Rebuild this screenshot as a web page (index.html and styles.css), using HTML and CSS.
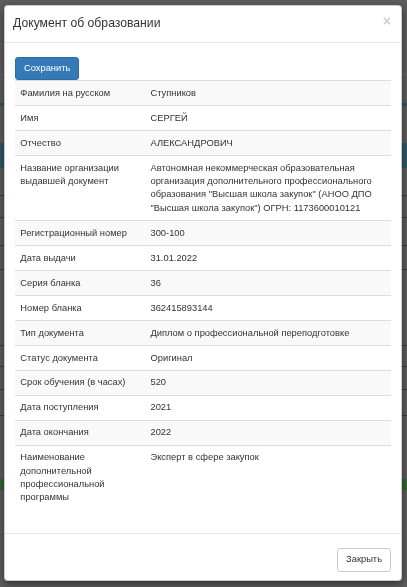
FILE: index.html
```html
<!DOCTYPE html>
<html lang="ru">
<head>
    <meta charset="UTF-8">
    <meta name="viewport" content="width=device-width, initial-scale=1.0">
    <title>Документ об образовании</title>
    <link rel="stylesheet" href="styles.css">
</head>
<body>
    <!-- page behind the dimmed backdrop -->
    <div class="page">
        <div class="page-row h28"></div>
        <div class="page-row h45 line-grey"></div>
        <div class="page-row h28 line-teal"></div>
        <div class="page-row h36"></div>
        <div class="page-row h24 block-teal"></div>
        <div class="page-row h27 line-green"></div>
        <div class="page-row h21 line-green"></div>
        <div class="page-row h27 line-green"></div>
        <div class="page-row h23 line-green"></div>
        <div class="page-row h75 line-green"></div>
        <div class="page-row h20 line-green"></div>
        <div class="page-row h22 line-green"></div>
        <div class="page-row h25 line-green"></div>
        <div class="page-row h62"></div>
        <div class="page-row h10 block-green"></div>
    </div>

    <div class="modal">
        <div class="modal-content">
            <div class="modal-header">
                <button type="button" class="close">&times;</button>
                <h4 class="modal-title">Документ об образовании</h4>
            </div>

            <div class="modal-body">
                <div class="toolbar">
                    <button type="button" class="btn btn-primary">Сохранить</button>
                </div>
                <table class="table">
                    <tr><td class="label">Фамилия на русском</td><td>Ступников</td></tr>
                    <tr><td class="label">Имя</td><td>СЕРГЕЙ</td></tr>
                    <tr><td class="label">Отчество</td><td>АЛЕКСАНДРОВИЧ</td></tr>
                    <tr><td class="label">Название организации выдавшей документ</td><td>Автономная некоммерческая образовательная организация дополнительного профессионального образования "Высшая школа закупок" (АНОО ДПО "Высшая школа закупок") ОГРН: 1173600010121</td></tr>
                    <tr><td class="label">Регистрационный номер</td><td>300-100</td></tr>
                    <tr><td class="label">Дата выдачи</td><td>31.01.2022</td></tr>
                    <tr><td class="label">Серия бланка</td><td>36</td></tr>
                    <tr><td class="label">Номер бланка</td><td>362415893144</td></tr>
                    <tr><td class="label">Тип документа</td><td>Диплом о профессиональной переподготовке</td></tr>
                    <tr><td class="label">Статус документа</td><td>Оригинал</td></tr>
                    <tr><td class="label">Срок обучения (в часах)</td><td>520</td></tr>
                    <tr><td class="label">Дата поступления</td><td>2021</td></tr>
                    <tr><td class="label">Дата окончания</td><td>2022</td></tr>
                    <tr><td class="label">Наименование дополнительной профессиональной программы</td><td>Эксперт в сфере закупок</td></tr>
                </table>
            </div>

            <div class="modal-footer">
                <button type="button" class="btn btn-default">Закрыть</button>
            </div>
        </div>
    </div>
</body>
</html>
```

FILE: styles.css
```css
body, html {
    margin: 0;
    height: 100%;
}
body {
    font-family: "Liberation Sans", Arial, sans-serif;
    font-size: 9.33px;
    line-height: 13.33px;
    color: #333;
    background-color: #5e5e5e;
    overflow: hidden;
}

/* dimmed page behind the modal */
.page-row {
    border-bottom: 1px solid transparent;
}
.h10 { height: 10px; }
.h20 { height: 20px; }
.h21 { height: 21px; }
.h22 { height: 22px; }
.h23 { height: 23px; }
.h24 { height: 24px; }
.h25 { height: 25px; }
.h27 { height: 27px; }
.h28 { height: 28px; }
.h36 { height: 36px; }
.h45 { height: 45px; }
.h62 { height: 62px; }
.h75 { height: 75px; }
.line-grey { border-bottom-color: #6c6c6c; }
.line-teal { border-bottom: 3px solid #2f5866; }
.line-green { border-bottom-color: #2b4a2b; }
.block-teal { background-color: #2f5a68; }
.block-green { background-color: #336633; }

/* modal */
.modal {
    position: fixed;
    top: 5px;
    left: 4px;
    width: 398px;
}
.modal-content {
    background-color: #fff;
    border: 1px solid rgba(0, 0, 0, 0.2);
    border-radius: 4px;
    box-shadow: 0 3px 10px rgba(0, 0, 0, 0.5);
}
.modal-header {
    padding: 9px 10px 10px 8px;
    border-bottom: 1px solid #e5e5e5;
}
.modal-title {
    margin: 0;
    font-size: 12.2px;
    font-weight: normal;
    line-height: 17px;
    color: #333;
}
.close {
    float: right;
    margin-top: -1px;
    padding: 0;
    border: 0;
    background: transparent;
    font-family: "Liberation Sans", Arial, sans-serif;
    font-size: 14px;
    font-weight: bold;
    line-height: 14px;
    color: #000;
    opacity: 0.2;
    cursor: pointer;
}
.modal-body {
    padding: 10px;
}
.toolbar {
    display: flex;
    margin-top: 4px;
}
.modal-footer {
    display: flex;
    justify-content: flex-end;
    padding: 14px 10px 8px;
    border-top: 1px solid #e5e5e5;
}

/* buttons */
.btn {
    padding: 4px 8px;
    font-family: "Liberation Sans", Arial, sans-serif;
    font-size: 9.33px;
    line-height: 13.33px;
    border: 1px solid transparent;
    border-radius: 3px;
    cursor: pointer;
}
.btn-primary {
    color: #fff;
    background-color: #337ab7;
    border-color: #2e6da4;
}
.btn-default {
    color: #333;
    background-color: #fff;
    border-color: #ccc;
}

/* table */
.table {
    width: 100%;
    border-collapse: collapse;
    margin-bottom: 13.33px;
}
.table td {
    padding: 5.33px;
    vertical-align: top;
    border-top: 1px solid #ddd;
}
.table tr:nth-child(odd) {
    background-color: #f9f9f9;
}
.table .label {
    width: 119.5px;
}
```
